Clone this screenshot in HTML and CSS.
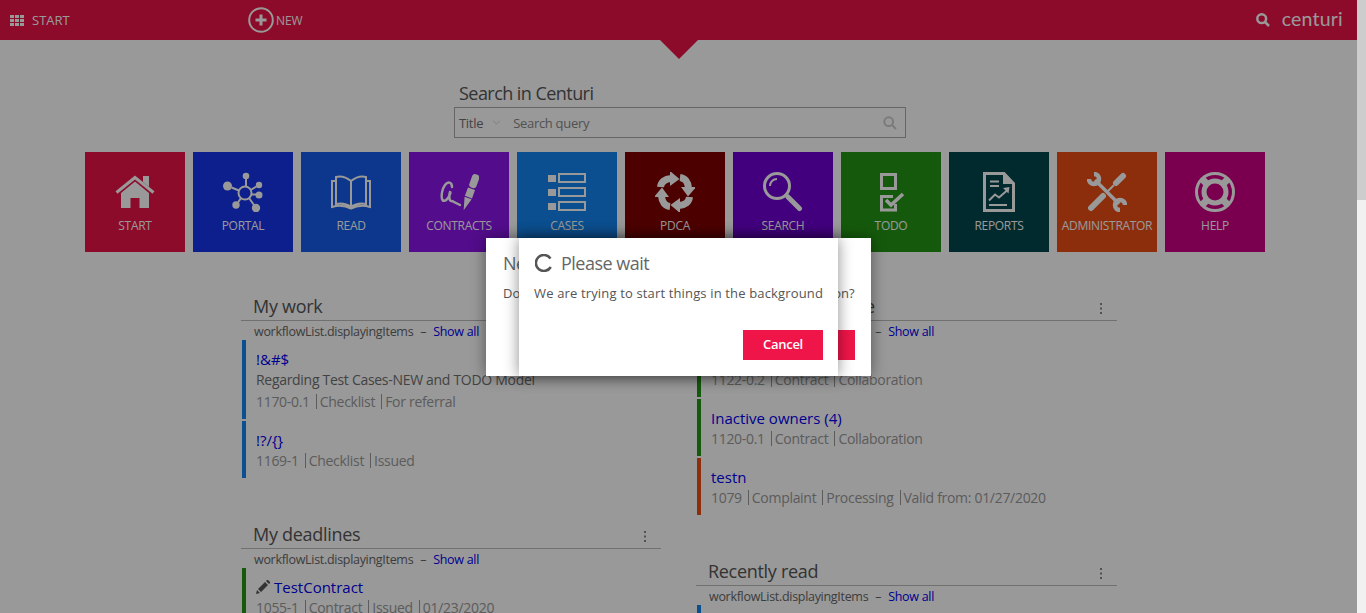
FILE: index.html
```html
<!DOCTYPE html>
<html lang="en">
<head>
    <meta charset="UTF-8">
    <title>Centuri</title>
    <link rel="stylesheet" href="styles.css">
</head>
<body>
  <div class="page">
    <header class="topbar">
      <div class="topbar-start">
        <svg class="grid-icon" viewBox="0 0 14 11"><path d="M0 0h4v3H0zM5 0h4v3H5zM10 0h4v3h-4zM0 4h4v3H0zM5 4h4v3H5zM10 4h4v3h-4zM0 8h4v3H0zM5 8h4v3H5zM10 8h4v3h-4z"/></svg>
        <span>START</span>
      </div>
      <div class="topbar-new">
        <svg class="new-icon" viewBox="0 0 26 26"><circle cx="13" cy="13" r="11.8"/><path d="M13 7.500v11M7.500 13h11"/></svg>
        <span>NEW</span>
      </div>
      <div class="topbar-right">
        <svg class="find-icon" viewBox="0 0 14 14"><circle cx="5.7" cy="5.7" r="4.4"/><path d="M9 9l4 4"/></svg>
        <span class="logo">centuri</span>
      </div>
    </header>
    <div class="notch"></div>

    <section class="search">
      <h2>Search in Centuri</h2>
      <div class="search-box">
        <span class="search-type">Title</span>
        <svg class="chevron" viewBox="0 0 10 6"><path d="M1 1l4 4 4-4"/></svg>
        <span class="search-query">Search query</span>
        <svg class="search-glass" viewBox="0 0 14 14"><circle cx="5.7" cy="5.7" r="4.4"/><path d="M9 9l4 4"/></svg>
      </div>
    </section>

    <nav class="tiles">
      <a class="tile tile-start">
        <svg viewBox="0 0 40 40"><path class="fill" d="M20 9.500L34 21v15H24.500V26h-9v10H6V21z"/><path class="line-3" d="M1.500 20.500L20 5.500l18.500 15"/><path class="fill" d="M28 4h6v11l-6-5z"/></svg>
        <span>START</span>
      </a>
      <a class="tile tile-portal">
        <svg viewBox="0 0 40 40"><g class="fill"><circle cx="23" cy="4" r="3.300"/><circle cx="36" cy="13" r="3.200"/><circle cx="36" cy="23" r="3.500"/><circle cx="33" cy="36" r="4.200"/><circle cx="13" cy="33" r="3.700"/><circle cx="4.500" cy="14" r="4.500"/></g><circle class="line-2" cx="22" cy="21" r="6.500"/><path class="line-2" d="M23 7v7.500M33.500 14.500l-6 3.500M33 22.500h-4.500M31 33l-5-7M15 30.500l3-4.500M8.500 15.500l7.500 3"/></svg>
        <span>PORTAL</span>
      </a>
      <a class="tile tile-read">
        <svg viewBox="0 0 40 40"><path class="line-2" d="M20 9C15 5 9 4 5 5v27c6-1 11 0 15 3 4-3 9-4 15-3V5c-4-1-10 0-15 4zM20 9v26M5 9H1v26c7-2 14-1 19 1.500C25 34 32 33 39 35V9h-4"/></svg>
        <span>READ</span>
      </a>
      <a class="tile tile-contracts">
        <svg viewBox="0 0 40 40"><path class="line-25" d="M13 15c0-5-4-6-7-2-3 4-4 11-3 14 1 3 4 2 6-1 2-3 3-6 2-6-1 2-1 9 1 9 2 0 3 1 5 2l4 2"/><g class="fill" transform="rotate(20 30 20)"><rect x="27.500" y="1" width="7.500" height="14" rx="3"/><rect x="27.500" y="16" width="7.500" height="9"/><path d="M27.500 26H35L31.200 39z"/></g></svg>
        <span>CONTRACTS</span>
      </a>
      <a class="tile tile-cases">
        <svg viewBox="0 0 40 40"><path class="fill" d="M1 3h8v7H1zM1 17h8v7H1zM1 31h8v7H1z"/><path class="line-2" d="M12 2h26v8H12zM12 16h26v8H12zM12 30h26v8H12z"/></svg>
        <span>CASES</span>
      </a>
      <a class="tile tile-pdca">
        <svg viewBox="0 0 40 40">
          <defs><g id="pdca-arrow"><path class="line-7" d="M5.500 15C6 10 10 7 16 6.500"/><path class="fill" d="M15 -1l9.500 8-9.500 7z"/></g></defs>
          <use href="#pdca-arrow"/><use href="#pdca-arrow" transform="rotate(90 20 20)"/><use href="#pdca-arrow" transform="rotate(180 20 20)"/><use href="#pdca-arrow" transform="rotate(270 20 20)"/>
        </svg>
        <span>PDCA</span>
      </a>
      <a class="tile tile-search">
        <svg viewBox="0 0 40 40"><circle class="line-3" cx="14" cy="14" r="12.500"/><path class="line-2" d="M7 14c0-4 3-7 7-7"/><path class="line-5" d="M25 25l11.500 11.500"/></svg>
        <span>SEARCH</span>
      </a>
      <a class="tile tile-todo">
        <svg viewBox="0 0 40 40"><path class="line-3" d="M10.500 2.500h14v14h-14zM24.500 32v6h-14V24.500H22"/><path class="line-4" d="M15 28l5 5 12-11"/></svg>
        <span>TODO</span>
      </a>
      <a class="tile tile-reports">
        <svg viewBox="0 0 40 40"><path class="line-3" d="M5.500 1.500H25l9.500 10v27h-29z"/><path class="fill" d="M24 1l11 11H24z"/><path class="line-2" d="M11 9.500h9M11 14h9M10 28.500l6-6 4 3 8-7M10 33h18"/><path class="fill" d="M24 16l6.500-1-1 6.500z"/></svg>
        <span>REPORTS</span>
      </a>
      <a class="tile tile-administrator">
        <svg viewBox="0 0 40 40"><path class="line-6" d="M36 4l-7 7M4 36l12-12"/><path class="line-2" d="M27 13l-7 7"/><path class="line-4" d="M8 8l24 24"/><path class="line-45" d="M7 2A5 5 0 1 1 2 7M38 33a5 5 0 1 0-5 5"/></svg>
        <span>ADMINISTRATOR</span>
      </a>
      <a class="tile tile-help">
        <svg viewBox="0 0 40 40"><circle class="line-3" cx="20" cy="20" r="18.500"/><circle class="line-5" cx="20" cy="20" r="11"/><path class="line-7" d="M12 12L7 7M28 12l5-5M12 28l-5 5M28 28l5 5"/></svg>
        <span>HELP</span>
      </a>
    </nav>

    <div class="columns">
      <div class="column">
        <section class="panel">
          <div class="panel-head"><h3>My work</h3><svg class="dots" viewBox="0 0 3 11"><path d="M0 0h2v2H0zM0 4.500h2v2H0zM0 9h2v2H0z"/></svg></div>
          <p class="panel-sub">workflowList.displayingItems <i>–</i> <a>Show all</a></p>
          <article class="item item-blue">
            <a class="item-title">!&amp;#$</a>
            <p class="item-desc">Regarding Test Cases-NEW and TODO Model</p>
            <p class="item-meta"><span>1170-0.1</span><span>Checklist</span><span>For referral</span></p>
          </article>
          <article class="item item-blue">
            <a class="item-title">!?/{}</a>
            <p class="item-meta"><span>1169-1</span><span>Checklist</span><span>Issued</span></p>
          </article>
        </section>
        <section class="panel">
          <div class="panel-head"><h3>My deadlines</h3><svg class="dots" viewBox="0 0 3 11"><path d="M0 0h2v2H0zM0 4.500h2v2H0zM0 9h2v2H0z"/></svg></div>
          <p class="panel-sub">workflowList.displayingItems <i>–</i> <a>Show all</a></p>
          <article class="item item-green">
            <a class="item-title"><svg class="pencil" viewBox="0 0 14 14"><path d="M0 14l1-4 3 3zM2 9l7-7 3 3-7 7zM10 1l1-1q.5-.3 1 0l2 2q.3.5 0 1l-1 1z"/></svg>TestContract</a>
            <p class="item-meta"><span>1055-1</span><span>Contract</span><span>Issued</span><span>01/23/2020</span></p>
          </article>
        </section>
      </div>
      <div class="column">
        <section class="panel">
          <div class="panel-head"><h3>Contracts at my care</h3><svg class="dots" viewBox="0 0 3 11"><path d="M0 0h2v2H0zM0 4.500h2v2H0zM0 9h2v2H0z"/></svg></div>
          <p class="panel-sub">workflowList.displayingItems <i>–</i> <a>Show all</a></p>
          <article class="item item-green">
            <a class="item-title">Inactive owners (3)</a>
            <p class="item-meta"><span>1122-0.2</span><span>Contract</span><span>Collaboration</span></p>
          </article>
          <article class="item item-green">
            <a class="item-title">Inactive owners (4)</a>
            <p class="item-meta"><span>1120-0.1</span><span>Contract</span><span>Collaboration</span></p>
          </article>
          <article class="item item-orange">
            <a class="item-title">testn</a>
            <p class="item-meta"><span>1079</span><span>Complaint</span><span>Processing</span><span>Valid from: 01/27/2020</span></p>
          </article>
        </section>
        <section class="panel">
          <div class="panel-head"><h3>Recently read</h3><svg class="dots" viewBox="0 0 3 11"><path d="M0 0h2v2H0zM0 4.500h2v2H0zM0 9h2v2H0z"/></svg></div>
          <p class="panel-sub">workflowList.displayingItems <i>–</i> <a>Show all</a></p>
          <article class="item item-blue">
            <a class="item-title">Read item</a>
          </article>
        </section>
      </div>
    </div>
  </div>

  <div class="scrollbar"><div class="scrollbar-thumb"></div></div>

  <div class="overlay"></div>

  <div class="dialog dialog-back">
    <h4>New session</h4>
    <p>Do you want to proceed with the current web application?</p>
    <button class="btn btn-back">OK</button>
  </div>

  <div class="dialog dialog-front">
    <h4><svg class="spinner" viewBox="0 0 18 18"><path d="M15.500 4.500A8 8 0 1 0 15.800 13"/></svg>Please wait</h4>
    <p>We are trying to start things in the background</p>
    <button class="btn">Cancel</button>
  </div>
</body>
</html>
```

FILE: styles.css
```css
html, body {
  margin: 0;
  height: 100%;
  overflow: hidden;
}

body {
  display: flex;
  background: #fff;
  font-family: "Open Sans", "Noto Sans", sans-serif;
  letter-spacing: -0.3px;
  color: #555;
}

h2, h3, h4, p {
  margin: 0;
  font-weight: normal;
}

.page {
  width: 1357px;
  flex: none;
}

/* top bar */
.topbar {
  display: flex;
  align-items: center;
  height: 40px;
  background: #ea1146;
  color: #fff;
  font-size: 12px;
}

.topbar-start {
  display: flex;
  align-items: center;
  width: 238px;
  padding-left: 10px;
  box-sizing: border-box;
  font-size: 13px;
  letter-spacing: 0;
}
.grid-icon {
  width: 14px;
  height: 11px;
  margin-right: 8px;
  fill: #fff;
}

.topbar-new {
  display: flex;
  align-items: center;
  margin-left: 10px;
  letter-spacing: -0.1px;
}
.new-icon {
  width: 26px;
  height: 26px;
  margin-right: 2px;
  fill: none;
  stroke: #fff;
  stroke-width: 2;
}
.new-icon path {
  stroke-width: 3;
}

.topbar-right {
  display: flex;
  align-items: center;
  margin-left: auto;
  padding-right: 14px;
}
.find-icon {
  width: 14px;
  height: 14px;
  margin-right: 12px;
  fill: none;
  stroke: #fff;
  stroke-width: 2.5;
}
.logo {
  font-family: "Lato", sans-serif;
  font-size: 19.500px;
  letter-spacing: 0.2px;
  line-height: 24px;
  margin-top: -3px;
}

.notch {
  position: absolute;
  left: 660px;
  top: 40px;
  border-top: 19px solid #ea1146;
  border-left: 19px solid transparent;
  border-right: 19px solid transparent;
}

/* search */
.search {
  width: 452px;
  margin: 42px 0 0 454px;
}
.search h2 {
  padding: 0 0 2px 5px;
  font-size: 18px;
  line-height: 23px;
  letter-spacing: -0.55px;
  color: #555;
}
.search-box {
  display: flex;
  align-items: center;
  height: 31px;
  box-sizing: border-box;
  padding: 0 8px 0 4px;
  border: 1px solid #aaa;
  font-size: 13px;
}
.search-type {
  color: #707070;
}
.chevron {
  width: 9px;
  height: 5px;
  margin: 0 12px 0 9px;
  fill: none;
  stroke: #ccc;
}
.search-query {
  flex: 1;
  color: #888;
}
.search-glass {
  width: 14px;
  height: 14px;
  fill: none;
  stroke: #ccc;
  stroke-width: 2;
}

/* tiles */
.tiles {
  display: flex;
  gap: 8px;
  margin: 14px 0 0 85px;
}
.tile {
  display: flex;
  flex-direction: column;
  align-items: center;
  width: 100px;
  height: 100px;
  padding-top: 20px;
  box-sizing: border-box;
  color: #fff;
  font-size: 12px;
  white-space: nowrap;
}
.tile svg {
  width: 40px;
  height: 40px;
  margin-bottom: 5px;
  fill: none;
  stroke: #fff;
}
.tile .fill { fill: #fff; stroke: none; }
.tile .line-2 { stroke-width: 2; }
.tile .line-25 { stroke-width: 2.5; stroke-linecap: round; }
.tile .line-3 { stroke-width: 3; }
.tile .line-4 { stroke-width: 3.5; }
.tile .line-45 { stroke-width: 4.5; }
.tile .line-5 { stroke-width: 5; stroke-linecap: round; }
.tile .line-6 { stroke-width: 6; stroke-linecap: round; }
.tile .line-7 { stroke-width: 7; }

.tile-start { background: #ea1146; }
.tile-portal { background: #1434e9; }
.tile-read { background: #145de9; }
.tile-contracts { background: #8a14e9; }
.tile-cases { background: #1484f0; }
.tile-pdca { background: #800000; }
.tile-search { background: #6e00d4; }
.tile-todo { background: #239614; }
.tile-reports { background: #00464b; }
.tile-administrator { background: #e94d14; }
.tile-help { background: #cc0084; }

/* lists */
.columns {
  display: grid;
  grid-template-columns: 420px 421px;
  gap: 35px;
  margin: 41px 0 0 241px;
}
.panel {
  margin-bottom: 43px;
}
.panel-head {
  display: flex;
  align-items: center;
  justify-content: space-between;
  height: 28px;
  padding: 0 14px 0 12px;
  border-bottom: 1px solid #bbb;
  box-sizing: border-box;
}
.panel-head h3 {
  margin-top: -2px;
  font-size: 18px;
  color: #555;
}
.dots {
  width: 3px;
  height: 11px;
  margin-top: 4px;
  fill: #888;
}
.panel-sub {
  height: 19px;
  padding-left: 13px;
  font-size: 12.500px;
  line-height: 22px;
  color: #666;
}
.panel-sub i {
  font-style: normal;
  margin: 0 4px;
}
.panel-sub a {
  color: #0000ee;
}

.item {
  margin: 0 0 2px 1px;
  padding: 9px 0 7px 10px;
  border-left: 4px solid;
}
.item-blue { border-color: #1484f0; }
.item-green { border-color: #239614; }
.item-orange { border-color: #e94d14; }

.item-title {
  display: block;
  margin-bottom: -1px;
  font-size: 15px;
  line-height: 21px;
  letter-spacing: 0;
  color: #0000ee;
}
.pencil {
  width: 14px;
  height: 14px;
  margin-right: 4px;
  fill: #555;
  vertical-align: -1px;
}
.item-desc {
  margin-bottom: 1px;
  font-size: 14px;
  line-height: 21px;
  color: #707070;
}
.item-meta {
  display: flex;
  font-size: 14px;
  line-height: 21px;
  color: #999;
}
.item-meta span + span {
  margin-left: 6px;
  padding-left: 4px;
  background: linear-gradient(#999, #999) left 3px / 1px 15px no-repeat;
}

/* scrollbar */
.scrollbar {
  flex: 1;
  background: #f1f1f1;
}
.scrollbar-thumb {
  height: 200px;
  background: #cdcdcd;
}

/* dialogs */
.overlay {
  position: absolute;
  left: 0;
  top: 0;
  width: 1357px;
  height: 100%;
  background: rgba(0, 0, 0, 0.4);
}
.dialog {
  position: absolute;
  top: 238px;
  height: 138px;
  box-sizing: border-box;
  background: #fff;
  box-shadow: 0 0 14px rgba(0, 0, 0, 0.45);
}
.dialog h4 {
  display: flex;
  align-items: center;
  font-size: 18px;
  line-height: 26px;
  letter-spacing: -0.5px;
  color: #666;
}
.dialog p {
  margin-top: 8px;
  font-size: 13px;
  line-height: 18px;
  letter-spacing: 0.15px;
  color: #555;
  white-space: nowrap;
}
.dialog-back {
  left: 486px;
  width: 385px;
  padding: 12px 17px;
}
.dialog-back p {
  letter-spacing: 0.02px;
}
.dialog-front {
  left: 519px;
  width: 319px;
  padding: 12px 15px;
}
.dialog-front h4 {
  padding-left: 1px;
}
.spinner {
  width: 18px;
  height: 18px;
  margin-right: 8px;
  fill: none;
  stroke: #555;
  stroke-width: 2.500;
}
.btn {
  position: absolute;
  right: 15px;
  bottom: 16px;
  width: 80px;
  height: 30px;
  padding: 0 0 2px;
  border: 0;
  background: #ef1549;
  color: #fff;
  font-family: inherit;
  font-size: 13px;
  font-weight: 600;
  letter-spacing: -0.3px;
}
.btn-back {
  right: 16px;
}
```
